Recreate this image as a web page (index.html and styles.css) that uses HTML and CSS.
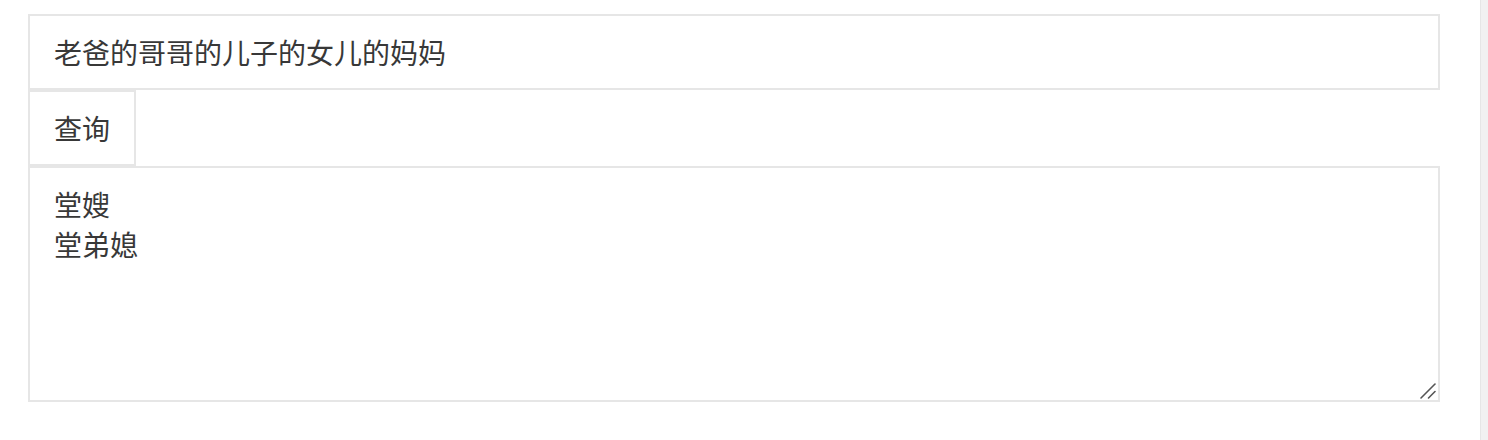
FILE: index.html
```html
<!DOCTYPE html>
<html lang="zh-CN">
<head>
<meta charset="utf-8">
<title>亲戚称呼查询</title>
<link rel="stylesheet" href="styles.css">
</head>
<body>
<div class="page">
  <main class="main">
    <input class="query-input" type="text" value="老爸的哥哥的儿子的女儿的妈妈">
    <button class="query-btn" type="button">查询</button>
    <div class="result-wrap">
      <textarea class="result">堂嫂
堂弟媳</textarea>
      <svg class="grip" width="18" height="18" viewBox="0 0 18 18" aria-hidden="true">
        <line x1="2" y1="16" x2="16" y2="2" />
        <line x1="9.5" y1="16" x2="16" y2="9.5" />
      </svg>
    </div>
  </main>
  <div class="scrollbar"></div>
</div>
</body>
</html>
```
FILE: styles.css
```css
html, body {
  margin: 0;
  padding: 0;
  background: #ffffff;
}
body {
  font-family: "Noto Sans CJK SC", "Noto Sans", sans-serif;
  color: #383838;
}
.page {
  display: flex;
  height: 440px;
}
.main {
  flex: 1;
  display: flex;
  flex-direction: column;
  align-items: flex-start;
  padding: 14px 40px 0 28px;
}
.query-input,
.query-btn,
.result {
  box-sizing: border-box;
  border: 2px solid #e6e6e6;
  border-radius: 0;
  background: #ffffff;
  color: #383838;
  font-family: "Noto Sans CJK SC", "Noto Sans", sans-serif;
  font-size: 28px;
  margin: 0;
  outline: none;
}
.query-input {
  width: 100%;
  height: 76px;
  padding: 0 24px;
}
.query-btn {
  height: 76px;
  padding: 0 24px;
  line-height: 72px;
  cursor: pointer;
}
.result-wrap {
  position: relative;
  width: 100%;
  height: 236px;
}
.result {
  display: block;
  width: 100%;
  height: 236px;
  padding: 16px 24px;
  line-height: 40px;
  resize: none;
}
.grip {
  position: absolute;
  right: 3px;
  bottom: 2px;
  stroke: #555555;
  stroke-width: 1.6;
  stroke-linecap: round;
}
.scrollbar {
  width: 7px;
  flex: none;
  background: #f1f1f1;
  border-left: 1px solid #e6e6e6;
}
```
